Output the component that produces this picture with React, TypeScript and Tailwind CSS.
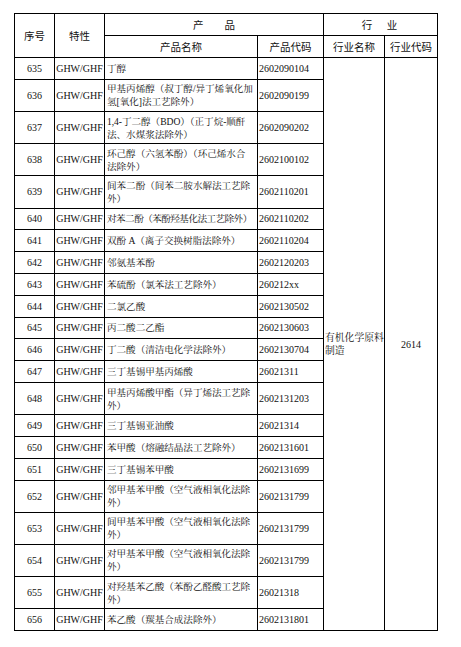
import React from "react";

type Row = { n: string; name: string[]; code: string; tight?: boolean };

const rows: Row[] = [
  { n: "635", name: ["丁醇"], code: "2602090104" },
  { n: "636", name: ["甲基丙烯醇（叔丁醇/异丁烯氧化加", "氢[氧化]法工艺除外）"], code: "2602090199" },
  { n: "637", name: ["1,4-丁二醇（BDO）（正丁烷-顺酐", "法、水煤浆法除外）"], code: "2602090202" },
  { n: "638", name: ["环己醇（六氢苯酚）（环己烯水合", "法除外）"], code: "2602100102" },
  { n: "639", name: ["间苯二酚（间苯二胺水解法工艺除", "外）"], code: "2602110201" },
  { n: "640", name: ["对苯二酚（苯酚羟基化法工艺除外）"], code: "2602110202", tight: true },
  { n: "641", name: ["双酚 A（离子交换树脂法除外）"], code: "2602110204" },
  { n: "642", name: ["邻氨基苯酚"], code: "2602120203" },
  { n: "643", name: ["苯硫酚（氯苯法工艺除外）"], code: "260212xx" },
  { n: "644", name: ["二氯乙酸"], code: "2602130502" },
  { n: "645", name: ["丙二酸二乙酯"], code: "2602130603" },
  { n: "646", name: ["丁二酸（清洁电化学法除外）"], code: "2602130704" },
  { n: "647", name: ["三丁基锡甲基丙烯酸"], code: "26021311" },
  { n: "648", name: ["甲基丙烯酸甲酯（异丁烯法工艺除", "外）"], code: "2602131203" },
  { n: "649", name: ["三丁基锡亚油酸"], code: "26021314" },
  { n: "650", name: ["苯甲酸（熔融结晶法工艺除外）"], code: "2602131601" },
  { n: "651", name: ["三丁基锡苯甲酸"], code: "2602131699" },
  { n: "652", name: ["邻甲基苯甲酸（空气液相氧化法除", "外）"], code: "2602131799" },
  { n: "653", name: ["间甲基苯甲酸（空气液相氧化法除", "外）"], code: "2602131799" },
  { n: "654", name: ["对甲基苯甲酸（空气液相氧化法除", "外）"], code: "2602131799" },
  { n: "655", name: ["对羟基苯乙酸（苯酚乙醛酸工艺除", "外）"], code: "26021318" },
  { n: "656", name: ["苯乙酸（羰基合成法除外）"], code: "2602131801" },
];

const serif = {
  fontFamily: '"Liberation Serif", "Noto Serif CJK SC", "Noto Sans CJK SC", serif',
};

export default function App() {
  return (
    <div className="w-[461px] h-[647px] bg-white pt-[13px] pl-[14px] text-[#111111]">
      <table className="border-collapse table-fixed w-[423px] text-[10px] leading-[13px]" style={serif}>
        <colgroup>
          <col className="w-[40px]" />
          <col className="w-[50px]" />
          <col className="w-[153px]" />
          <col className="w-[66px]" />
          <col className="w-[61px]" />
          <col className="w-[53px]" />
        </colgroup>
        <thead className="font-['Noto_Sans_CJK_SC',sans-serif] text-[10.5px]">
          <tr className="h-[22px]">
            <th rowSpan={2} className="border border-black font-normal text-center align-middle p-0">序号</th>
            <th rowSpan={2} className="border border-black font-normal text-center align-middle p-0">特性</th>
            <th colSpan={2} className="border border-black font-normal text-center align-middle p-0">产　　品</th>
            <th colSpan={2} className="border border-black font-normal text-center align-middle p-0 tracking-[2px]">行　业</th>
          </tr>
          <tr className="h-[22px]">
            <th className="border border-black font-normal text-center align-middle p-0">产品名称</th>
            <th className="border border-black font-normal text-center align-middle p-0">产品代码</th>
            <th className="border border-black font-normal text-center align-middle p-0">行业名称</th>
            <th className="border border-black font-normal text-center align-middle p-0">行业代码</th>
          </tr>
        </thead>
        <tbody>
          {rows.map((r, i) => (
            <tr key={r.n} className={r.name.length > 1 ? "h-[32.2px]" : "h-[21.8px]"}>
              <td className="border border-black text-center align-middle p-0">{r.n}</td>
              <td className="border border-black text-center align-middle p-0 whitespace-nowrap">GHW/GHF</td>
              <td className={"border border-black align-middle pl-[2px] pr-0 py-0 whitespace-nowrap overflow-hidden text-[9.6px] " + (r.tight ? "tracking-[-0.55px]" : "tracking-[-0.05px]")}>
                {r.name.map((l, j) => (
                  <div key={j}>{l}</div>
                ))}
              </td>
              <td className="border border-black align-middle pl-[1px] p-0 whitespace-nowrap">{r.code}</td>
              {i === 0 && (
                <>
                  <td rowSpan={rows.length} className="border border-black align-middle pl-[1px] p-0 whitespace-nowrap text-[9.8px]">
                    <div>有机化学原料</div>
                    <div>制造</div>
                  </td>
                  <td rowSpan={rows.length} className="border border-black align-middle text-center p-0">2614</td>
                </>
              )}
            </tr>
          ))}
        </tbody>
      </table>
    </div>
  );
}
